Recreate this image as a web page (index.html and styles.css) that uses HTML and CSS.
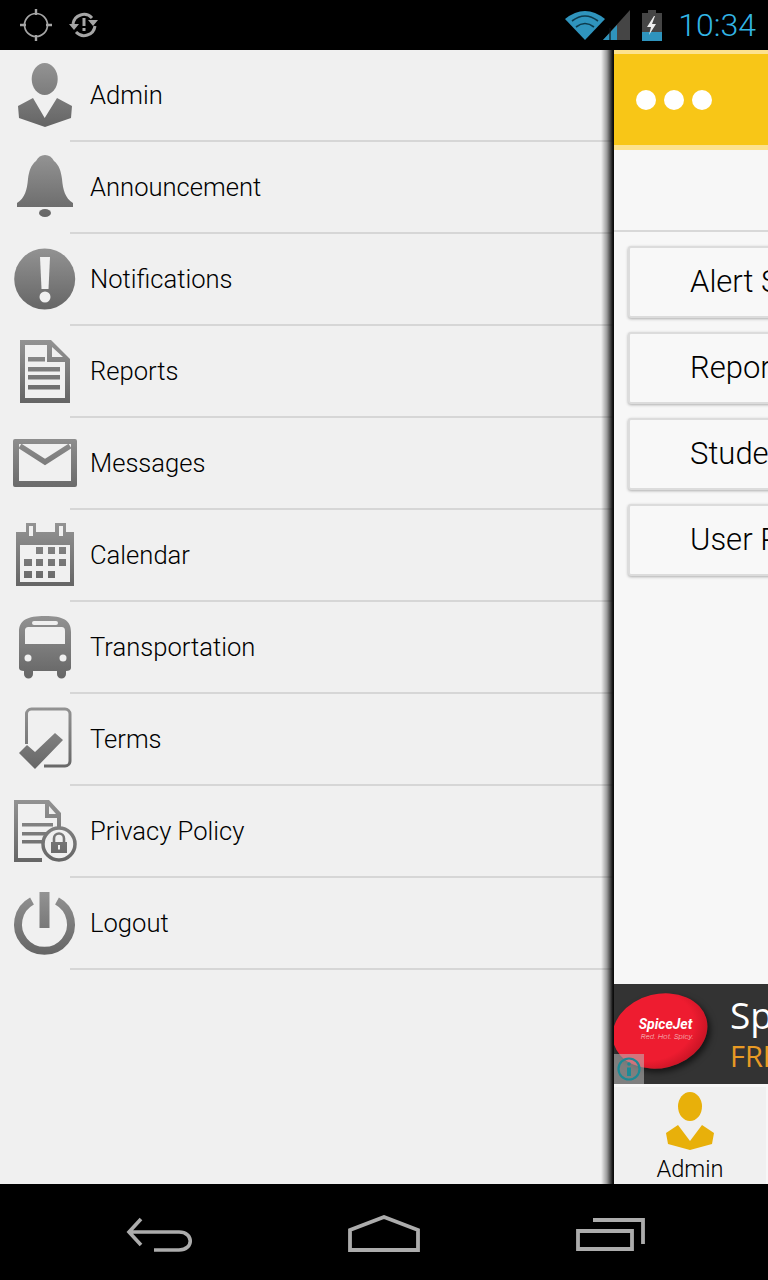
FILE: index.html
```html
<!DOCTYPE html>
<html lang="en">
<head>
<meta charset="utf-8">
<title>Admin menu</title>
<link rel="stylesheet" href="styles.css">
</head>
<body>
<svg class="defs" width="0" height="0" aria-hidden="true"><defs>
<linearGradient id="g" gradientUnits="userSpaceOnUse" x1="0" y1="12" x2="0" y2="78"><stop offset="0" stop-color="#949494"/><stop offset="1" stop-color="#646464"/></linearGradient>
</defs></svg>
<div class="phone">
<header class="status">
  <div class="status-left">
    <svg class="st-ic" width="36" height="36" viewBox="0 0 36 36" fill="none" stroke="#a6a6a6" stroke-width="1.7"><circle cx="18" cy="18" r="11.5"/><path d="M18 2v6M18 28v6M2 18h6M28 18h6" stroke-width="2.4"/></svg>
    <svg class="st-ic" width="36" height="36" viewBox="0 0 36 36" fill="none" stroke="#a6a6a6"><path d="M7 17a11 11 0 0 1 19-6" stroke-width="3"/><path d="M29 19a11 11 0 0 1-19 6" stroke-width="3"/><path d="M22 13h10l-5 6zM3 17h10l-5 6z" fill="#a6a6a6" stroke="none"/><path d="M18 11v8" stroke-width="3"/><path d="M18 21v3" stroke-width="3"/></svg>
  </div>
  <div class="status-right">
    <svg class="st-wifi" width="66" height="32" viewBox="0 0 66 32"><path d="M0 10Q20-6 40 10L20 31z" fill="#2f94bd"/><path d="M7 12Q20 2 33 12M11 18Q20 11 29 18" fill="none" stroke="#0d3a4c" stroke-width="1.6"/><path d="M38 31 65 1v30z" fill="#454545"/><path d="M38 31 52 16v15z" fill="#2f94bd"/><path d="M45 31v-12" stroke="#111" stroke-width="1.2"/></svg>
    <svg class="st-batt" width="20" height="32" viewBox="0 0 20 32"><path d="M6 1h8v3h6v28H0V4h6z" fill="#454545"/><path d="M0 23h20v9H0z" fill="#2f94bd"/><path d="M12 7 5 18h4l-2 8 7-11h-4l3-8z" fill="#eee"/></svg>
    <span class="clock">10:34</span>
  </div>
</header>
<div class="content">
  <nav class="drawer">
    <a class="row"><svg class="ic" viewBox="0 0 80 92"><g fill="url(#g)"><ellipse cx="44.7" cy="29" rx="13" ry="16"/><path d="M18 56 33 48 44.7 68 57 48 72 56 71 68 45 77 19 68z"/></g></svg><span class="label">Admin</span></a>
    <a class="row"><svg class="ic" viewBox="0 0 80 92"><g fill="url(#g)"><path d="M45 13c-4 0-7 2-9 6-5 4-7 10-8 18-1 11-3 19-11 24v4h56v-4c-8-5-10-13-11-24-1-8-3-14-8-18-2-4-5-6-9-6z"/><ellipse cx="45" cy="71" rx="6" ry="4"/></g></svg><span class="label">Announcement</span></a>
    <a class="row"><svg class="ic" viewBox="0 0 80 92"><circle cx="44.7" cy="45" r="30.5" fill="url(#g)"/><path d="M40 23h10l-1.500 32h-7z" fill="#f0f0f0"/><circle cx="45" cy="63" r="5.500" fill="#f0f0f0"/></svg><span class="label">Notifications</span></a>
    <a class="row"><svg class="ic" viewBox="0 0 80 92"><path fill="url(#g)" fill-rule="evenodd" d="M20 14H51L70 33V77H20zM25 19V72H65V36H47V19zM52 21V31H63z"/><path fill="url(#g)" d="M28 31h17v4.500H28zM28 41h32v4.500H28zM28 49h32v4.500H28zM28 59h32v4.500H28z"/></svg><span class="label">Reports</span></a>
    <a class="row"><svg class="ic" viewBox="0 0 80 92"><path fill="url(#g)" fill-rule="evenodd" d="M15 21H75a2 2 0 0 1 2 2V67a2 2 0 0 1-2 2H15a2 2 0 0 1-2-2V23a2 2 0 0 1 2-2zM19 26V63H71V26z"/><path d="M20 28 45 44 70 28" fill="none" stroke="url(#g)" stroke-width="5.500"/></svg><span class="label">Messages</span></a>
    <a class="row"><svg class="ic" viewBox="0 0 80 92"><path fill="url(#g)" fill-rule="evenodd" d="M16 22H26V13H36V22H55V13H66V22H74V76H16zM20 35V72H70V35zM29 16V26H33V16zM59 16V26H63V16z"/><path fill="url(#g)" d="M36 37h7v7h-7zM48 37h7v7h-7zM59 37h7v7h-7zM24 49h8v7h-8zM36 49h7v7h-7zM48 49h7v7h-7zM59 49h7v7h-7zM24 61h8v7h-8zM36 61h7v7h-7zM48 61h7v7h-7z"/></svg><span class="label">Calendar</span></a>
    <a class="row"><svg class="ic" viewBox="0 0 80 92"><path fill="url(#g)" d="M19 30c0-12 8-16 26-16s26 4 26 16V66c0 2-2 3-5 3v3a4.500 4.500 0 0 1-9 0V69H33v3a4.500 4.500 0 0 1-9 0V69c-3 0-5-1-5-3z"/><path fill="#f0f0f0" d="M29 25h32c3 0 4 1 4 4V42H25V29c0-3 1-4 4-4zM34 19h22a1.500 1.500 0 0 1 0 4H34a1.500 1.500 0 0 1 0-4z"/><circle cx="28" cy="56" r="3.500" fill="#f0f0f0"/><circle cx="63" cy="56" r="3.500" fill="#f0f0f0"/></svg><span class="label">Transportation</span></a>
    <a class="row"><svg class="ic" viewBox="0 0 80 92"><path fill="none" stroke="url(#g)" stroke-width="3" d="M26.500 50V20a5 5 0 0 1 5-5H65a5 5 0 0 1 5 5V67a5 5 0 0 1-5 5H44"/><path fill="url(#g)" d="M19 59 35 75 63 46 55 39 35 58 27 51z"/></svg><span class="label">Terms</span></a>
    <a class="row"><svg class="ic" viewBox="0 0 80 92"><path fill="url(#g)" fill-rule="evenodd" d="M14 14H49L61 27V62H57V32H45V18H18V72H42V76H14zM49 20V28H56z"/><path fill="url(#g)" d="M22 37h31v3.500H22zM22 46h31v3.500H22zM22 54h23v3.500H22z"/><circle cx="59" cy="58" r="16" fill="#f0f0f0" stroke="url(#g)" stroke-width="3.500"/><path fill="none" stroke="url(#g)" stroke-width="2.600" d="M54 56v-3.500a5 5 0 0 1 10 0V56"/><path fill="url(#g)" fill-rule="evenodd" d="M51 56h16v11H51zM58 59v4.500h2V59z"/></svg><span class="label">Privacy Policy</span></a>
    <a class="row"><svg class="ic" viewBox="0 0 80 92"><path fill="none" stroke="url(#g)" stroke-width="8" d="M32 23A26.500 26.500 0 1 0 57 23"/><path fill="url(#g)" d="M39.500 14h10v36h-10z"/></svg><span class="label">Logout</span></a>
  </nav>
  <main class="panel">
    <div class="bar"><i class="dot"></i><i class="dot"></i><i class="dot"></i></div>
    <div class="sub"></div>
    <div class="list">
      <div class="btn">Alert Settings</div>
      <div class="btn">Reports</div>
      <div class="btn">Students</div>
      <div class="btn">User Profile</div>
    </div>
    <div class="ad">
      <div class="ad-logo"><span class="ad-name">SpiceJet</span><span class="ad-tag">Red. Hot. Spicy.</span></div>
      <div class="ad-copy"><span class="ad-title">SpiceJet</span><span class="ad-offer">FREE</span></div>
      <div class="ad-info"><svg width="24" height="24" viewBox="0 0 24 24"><circle cx="12" cy="12" r="10.500" fill="none" stroke="#1d8a96" stroke-width="2.200"/><circle cx="12" cy="7" r="1.800" fill="#1d8a96"/><path d="M10 10.500h4V19h-4z" fill="#1d8a96"/></svg></div>
    </div>
    <div class="tab">
      <svg width="50" height="58" viewBox="0 0 50 58"><ellipse cx="25" cy="14.500" rx="12" ry="14.500" fill="#e8b00a"/><path d="M1 41 13 33 25 49 37 33 49 41 47 52 25 58 3 52z" fill="#e8b00a"/></svg>
      <span class="tab-label">Admin</span>
    </div>
  </main>
</div>
<footer class="nav">
  <svg width="68" height="38" viewBox="0 0 68 38" fill="none" stroke="#acacac" stroke-width="3.600"><path d="M15 3 3 16 15 29M3 16H53C68 16 68 34 53 34H28"/></svg>
  <svg class="nav-home" width="74" height="38" viewBox="0 0 74 38" fill="none" stroke="#acacac" stroke-width="3.800"><path d="M2 15 36 2 70 15V35H2z"/></svg>
  <svg width="70" height="38" viewBox="0 0 70 38" fill="none" stroke="#acacac" stroke-width="3.800"><path d="M2 15H56V33H2zM17 4H67V28"/></svg>
</footer>
</div>
</body>
</html>
```
FILE: styles.css
```css
* { box-sizing: border-box; }
html, body { margin: 0; padding: 0; }
body { width: 768px; height: 1280px; overflow: hidden; background: #000; font-family: Roboto, "Liberation Sans", Arial, sans-serif; font-weight: 300; color: #000; }
.defs { display: block; height: 0; }
.phone { width: 768px; height: 1280px; display: flex; flex-direction: column; }

.status { height: 50px; flex: none; background: #000; display: flex; justify-content: space-between; align-items: center; padding: 0 12px 0 18px; }
.status-left { display: flex; gap: 12px; }
.status-right { display: flex; align-items: center; }
.st-wifi { margin-right: 11px; }
.st-batt { margin-right: 16px; }
.clock { font-family: Roboto, sans-serif; font-weight: 300; font-size: 32px; color: #33b5e5; line-height: 50px; }

.content { flex: 1; display: flex; min-height: 0; }
.drawer { width: 614px; flex: none; background: #f0f0f0; position: relative; }
.drawer::after { content: ""; position: absolute; top: 0; bottom: 0; right: 0; width: 13px; background: linear-gradient(90deg, rgba(0,0,0,0), rgba(0,0,0,.35) 45%, #0c0c0c 92%); }
.row { display: flex; height: 92px; }
.ic { width: 80px; height: 92px; flex: none; margin-right: -10px; }
.label { flex: 1; font-size: 25.6px; padding-left: 20px; line-height: 90px; border-bottom: 2px solid #d6d6d6; }

.panel { flex: 1; min-width: 0; overflow: hidden; display: flex; flex-direction: column; background: #f7f7f7; }
.bar { height: 100px; flex: none; background: #f8c617; border-top: 4px solid #fde28e; border-bottom: 5px solid #fde28e; display: flex; align-items: center; gap: 8px; padding-left: 22px; }
.dot { width: 20px; height: 20px; border-radius: 50%; background: #fff; }
.sub { height: 82px; flex: none; border-bottom: 2px solid #d8d8d8; }
.list { flex: 1; padding: 14px 0 0 14px; display: flex; flex-direction: column; gap: 14px; }
.btn { width: 400px; height: 72px; flex: none; background: #f8f8f8; border: 2px solid #dcdcdc; border-radius: 3px; box-shadow: 0 1px 3px rgba(0,0,0,.3); font-size: 31px; line-height: 68px; padding-left: 60px; white-space: nowrap; }

.ad { height: 100px; flex: none; background: #333; position: relative; overflow: hidden; }
.ad-logo { position: absolute; left: -2px; top: 10px; width: 96px; height: 74px; border-radius: 50%; background: radial-gradient(ellipse at 42% 42%, #ee1c30 55%, #c01222 80%, #8c0c16); transform: rotate(-14deg); box-shadow: 2px 4px 6px rgba(0,0,0,.6); display: flex; flex-direction: column; align-items: center; justify-content: center; color: #fff; }
.ad-name { font-size: 14px; font-weight: 700; font-style: italic; line-height: 15px; margin-left: 14px; transform: rotate(14deg); }
.ad-tag { font-size: 8px; font-style: italic; line-height: 10px; margin-left: 10px; color: #f5c8c8; white-space: nowrap; transform: rotate(14deg); }
.ad-copy { position: absolute; left: 116px; top: 8px; display: flex; flex-direction: column; font-family: "Open Sans", sans-serif; font-weight: 400; white-space: nowrap; }
.ad-title { font-size: 37px; line-height: 46px; color: #fff; }
.ad-offer { font-size: 29px; line-height: 36px; color: #e89a24; }
.ad-info { position: absolute; left: 0; bottom: 0; width: 30px; height: 30px; background: rgba(190,190,190,.55); display: flex; align-items: center; justify-content: center; }

.tab { height: 100px; flex: none; background: #f0f0f0; border-top: 3px solid #f7f7f7; display: flex; flex-direction: column; align-items: center; width: 152px; padding-top: 5px; }
.tab-label { font-size: 23.6px; line-height: 30px; margin-top: 4px; }

.nav { height: 96px; flex: none; background: #000; display: flex; justify-content: space-between; align-items: flex-start; padding: 32px 122px 0 126px; }
.nav-home { margin-top: -1px; }
```
